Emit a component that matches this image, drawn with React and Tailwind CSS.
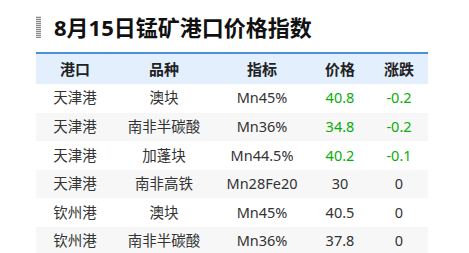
import React from "react";

const FONT = "font-['Noto_Sans','Noto_Sans_CJK_SC',sans-serif]";

const rows = [
  { port: "天津港", kind: "澳块", spec: "Mn45%", price: "40.8", change: "-0.2", up: "down" },
  { port: "天津港", kind: "南非半碳酸", spec: "Mn36%", price: "34.8", change: "-0.2", up: "down" },
  { port: "天津港", kind: "加蓬块", spec: "Mn44.5%", price: "40.2", change: "-0.1", up: "down" },
  { port: "天津港", kind: "南非高铁", spec: "Mn28Fe20", price: "30", change: "0", up: "flat" },
  { port: "钦州港", kind: "澳块", spec: "Mn45%", price: "40.5", change: "0", up: "flat" },
  { port: "钦州港", kind: "南非半碳酸", spec: "Mn36%", price: "37.8", change: "0", up: "flat" },
];

const cols = ["w-[78px]", "w-[100px]", "w-[96px]", "w-[60px]", "w-[58px]"];

const App = () => {
  return (
    <div className={`w-[469px] h-[253px] overflow-hidden bg-white pt-[16px] pl-[36px] ${FONT} text-[#333]`}>
      <div className="flex items-center h-[22px]">
        <div className="w-[5px] h-[22px] bg-[repeating-linear-gradient(0deg,#8a8a8a_0_1px,#e0e0e0_1px_2px)]" />
        <h1 className="ml-[13px] text-[22px] leading-none font-bold text-[#111]">8月15日锰矿港口价格指数</h1>
      </div>

      <div className="mt-[14px] w-[392px] border-t-2 border-[#4a8fe0]">
        <div className="flex h-[30px] items-center bg-[#e3effd] text-[15px] font-bold text-[#222]">
          {["港口", "品种", "指标", "价格", "涨跌"].map((h, i) => (
            <div key={h} className={`${cols[i]} text-center`}>{h}</div>
          ))}
        </div>
        {rows.map((r, idx) => {
          const color = r.up === "down" ? "text-[#0aad0a]" : "text-[#333]";
          return (
            <div key={idx} className={`flex h-[28.6px] items-center text-[14.5px] ${idx % 2 ? "bg-[#f7f7f7]" : "bg-white"}`}>
              <div className={`${cols[0]} text-center`}>{r.port}</div>
              <div className={`${cols[1]} text-center`}>{r.kind}</div>
              <div className={`${cols[2]} text-center`}>{r.spec}</div>
              <div className={`${cols[3]} text-center ${color}`}>{r.price}</div>
              <div className={`${cols[4]} text-center ${color}`}>{r.change}</div>
            </div>
          );
        })}
      </div>
    </div>
  );
};

export default App;
